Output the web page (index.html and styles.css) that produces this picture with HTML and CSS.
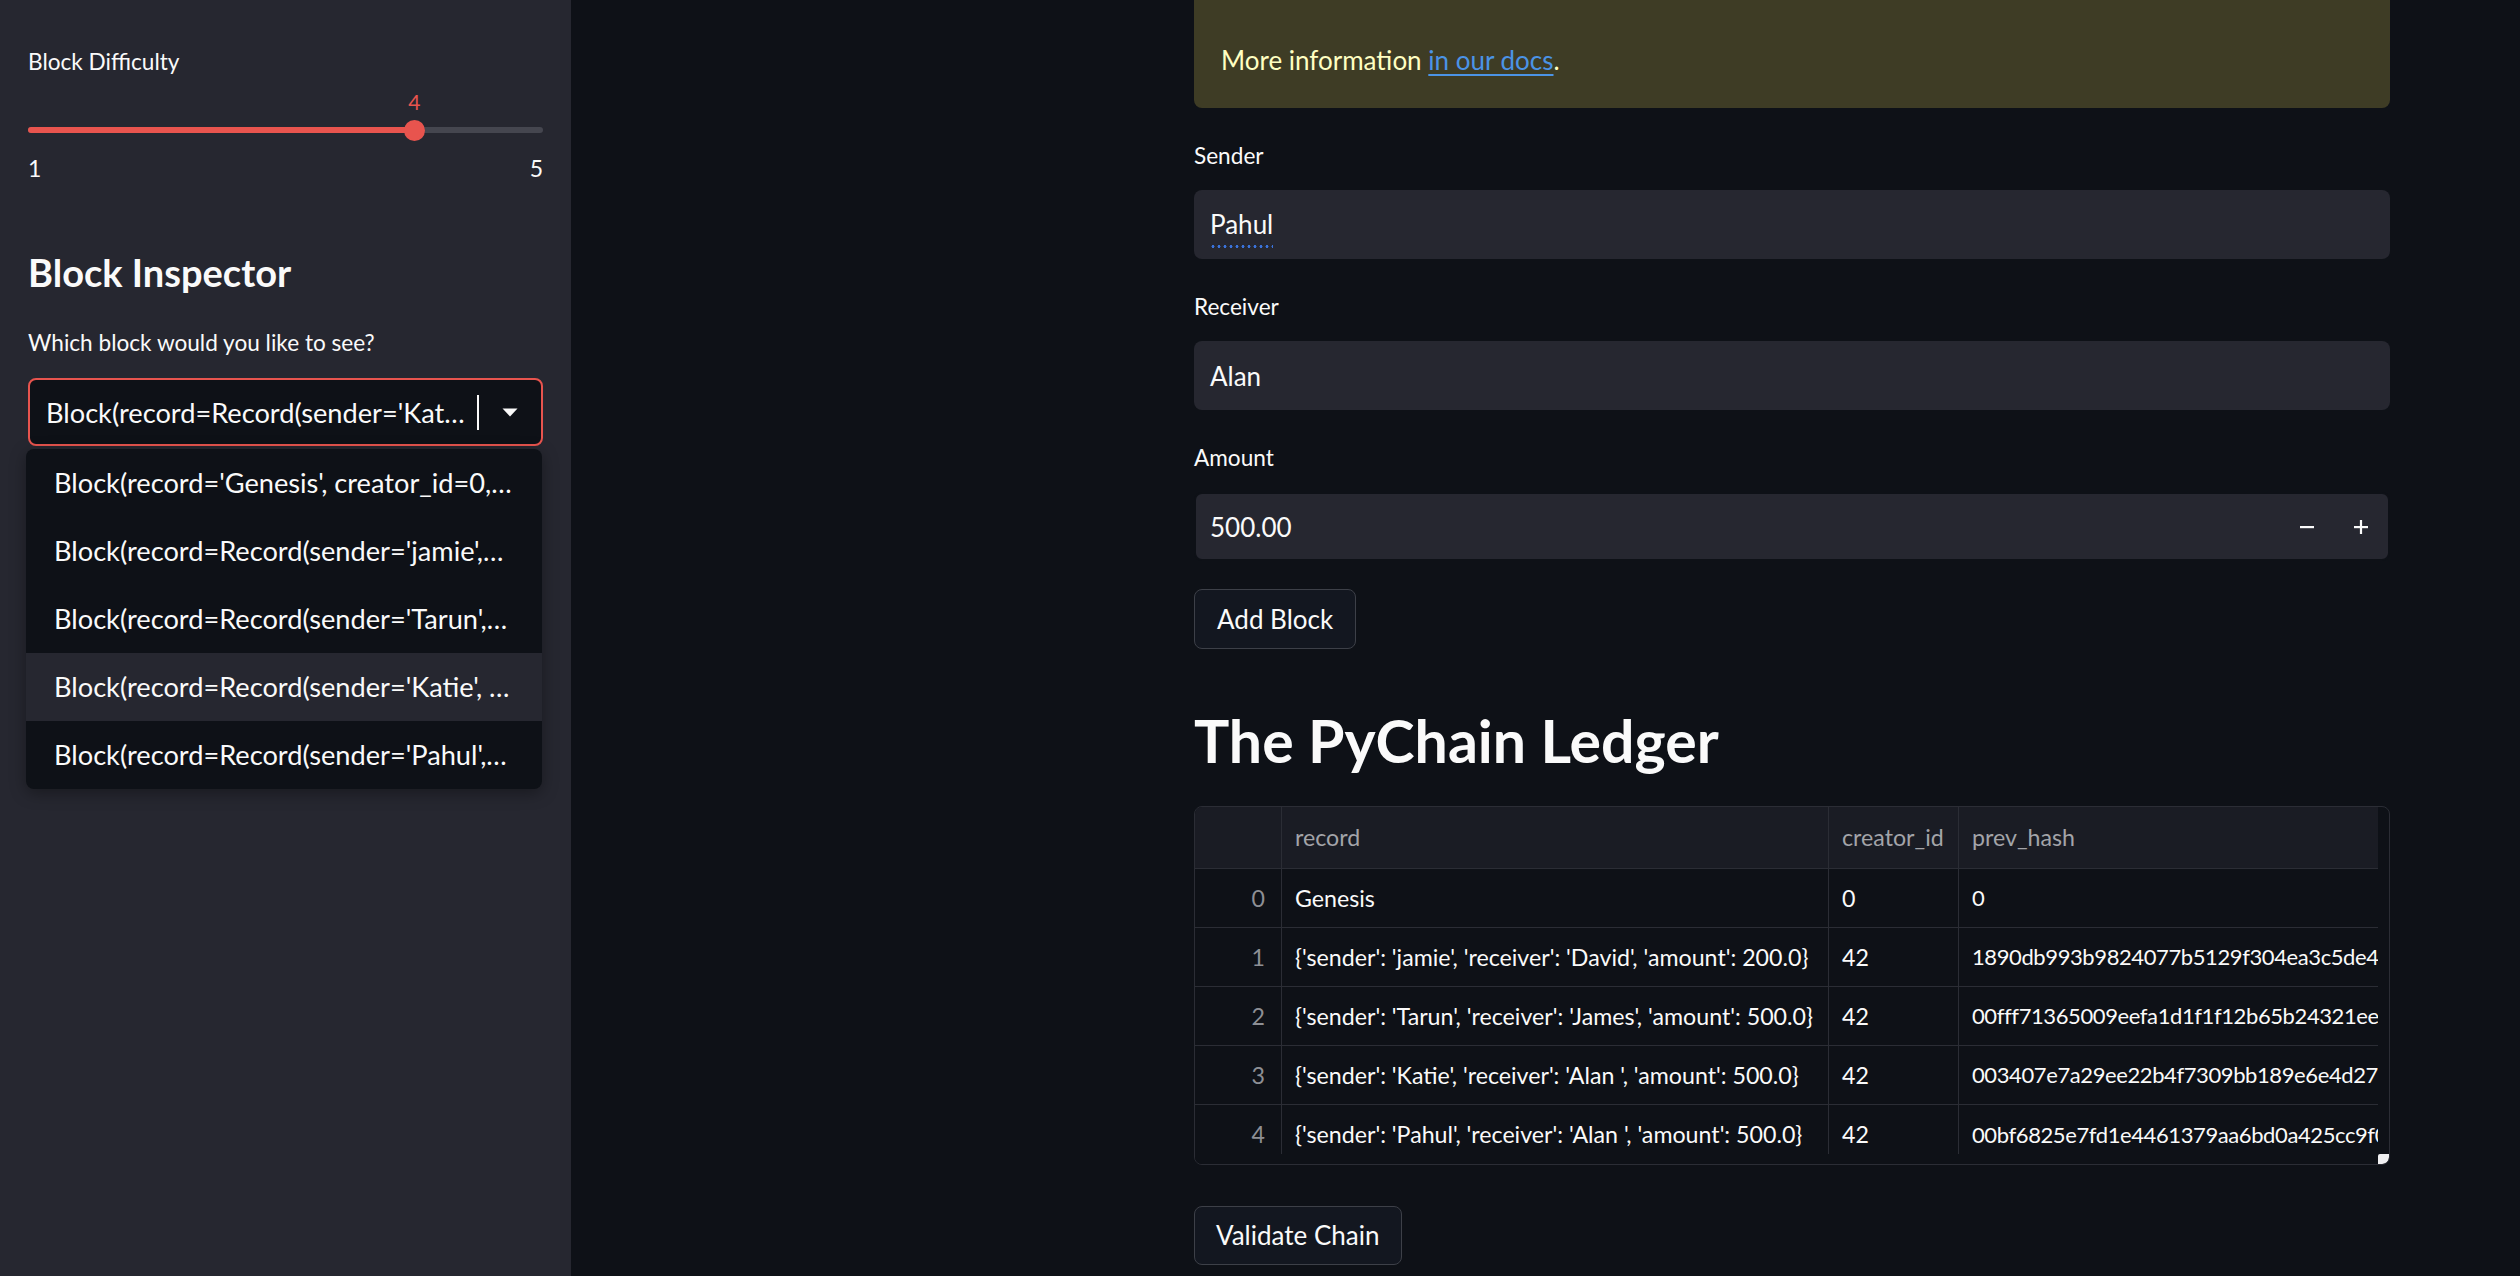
FILE: index.html
```html
<!DOCTYPE html>
<html lang="en">
<head>
<meta charset="utf-8">
<title>PyChain</title>
<link rel="stylesheet" href="styles.css">
</head>
<body>
<div class="app">
  <aside class="sidebar">
    <div class="label">Block Difficulty</div>
    <div class="slider">
      <div class="track">
        <div class="track-fill" style="width:75%"></div>
        <div class="thumb" style="left:75%"><span class="thumb-value">4</span></div>
      </div>
      <div class="ticks"><span>1</span><span>5</span></div>
    </div>

    <h2 class="side-heading">Block Inspector</h2>
    <div class="label side-label">Which block would you like to see?</div>
    <div class="select-wrap">
      <div class="select">
        <div class="select-text">Block(record=Record(sender='Kat…</div>
        <div class="caret"></div>
        <div class="select-arrow">
          <svg width="16" height="9" viewBox="0 0 16 9"><path d="M0.5 0.5 L15.5 0.5 L8 8.5 Z" fill="#fafafa"/></svg>
        </div>
      </div>
      <ul class="menu">
        <li class="menu-item">Block(record='Genesis', creator_id=0,…</li>
        <li class="menu-item">Block(record=Record(sender='jamie',…</li>
        <li class="menu-item">Block(record=Record(sender='Tarun',…</li>
        <li class="menu-item is-active">Block(record=Record(sender='Katie', …</li>
        <li class="menu-item">Block(record=Record(sender='Pahul',…</li>
      </ul>
    </div>
  </aside>

  <main class="main">
    <div class="content">
      <div class="alert">
        <p class="code-line"><code>streamlit run your_script.py [-- script args]</code></p>
        <p>More information <a href="#" class="link">in our docs</a>.</p>
      </div>

      <div class="field">
        <div class="label">Sender</div>
        <div class="input"><span class="spell">Pahul</span></div>
      </div>
      <div class="field">
        <div class="label">Receiver</div>
        <div class="input"><span>Alan</span></div>
      </div>
      <div class="field">
        <div class="label">Amount</div>
        <div class="input number">
          <span class="number-value">500.00</span>
          <div class="step">
            <svg width="14" height="14" viewBox="0 0 14 14"><rect x="0" y="6" width="14" height="2.2" fill="#fafafa"/></svg>
          </div>
          <div class="step">
            <svg width="14" height="14" viewBox="0 0 14 14"><rect x="0" y="6" width="14" height="2.2" fill="#fafafa"/><rect x="5.9" y="0" width="2.2" height="14" fill="#fafafa"/></svg>
          </div>
        </div>
      </div>

      <button class="btn btn-add">Add Block</button>

      <h1 class="title">The PyChain Ledger</h1>

      <div class="grid-wrap">
        <table class="grid">
          <colgroup>
            <col class="c-idx"><col class="c-rec"><col class="c-cre"><col class="c-hash">
          </colgroup>
          <thead>
            <tr><th class="idx"></th><th>record</th><th>creator_id</th><th class="last">prev_hash</th></tr>
          </thead>
          <tbody>
            <tr><td class="idx">0</td><td>Genesis</td><td>0</td><td class="last hash">0</td></tr>
            <tr><td class="idx">1</td><td>{'sender': 'jamie', 'receiver': 'David', 'amount': 200.0}</td><td>42</td><td class="last hash">1890db993b9824077b5129f304ea3c5de44c0e</td></tr>
            <tr><td class="idx">2</td><td>{'sender': 'Tarun', 'receiver': 'James', 'amount': 500.0}</td><td>42</td><td class="last hash">00fff71365009eefa1d1f1f12b65b24321eea7b</td></tr>
            <tr><td class="idx">3</td><td>{'sender': 'Katie', 'receiver': 'Alan ', 'amount': 500.0}</td><td>42</td><td class="last hash">003407e7a29ee22b4f7309bb189e6e4d270c1</td></tr>
            <tr><td class="idx">4</td><td>{'sender': 'Pahul', 'receiver': 'Alan ', 'amount': 500.0}</td><td>42</td><td class="last hash">00bf6825e7fd1e4461379aa6bd0a425cc9f0d3</td></tr>
          </tbody>
        </table>
        <div class="hscroll"></div>
        <div class="corner"></div>
      </div>

      <button class="btn btn-validate">Validate Chain</button>
    </div>
  </main>
</div>
</body>
</html>
```

FILE: styles.css
```css
* { box-sizing: border-box; }
html, body { margin: 0; padding: 0; }
body {
  font-family: Lato, "Noto Sans", "DejaVu Sans", sans-serif;
  background: #0e1117;
  color: #fafafa;
  overflow: hidden;
}
.app { display: flex; height: 1276px; }

/* ---------- sidebar ---------- */
.sidebar {
  width: 571px;
  flex: none;
  background: #262730;
  padding: 45px 28px 0 28px;
}
.label {
  font-size: 22.6px;
  line-height: 34px;
  height: 34px;
  color: #fafafa;
  white-space: nowrap;
}
.slider { position: relative; }
.track {
  position: relative;
  height: 6px;
  margin-top: 48px;
  background: #45464f;
  border-radius: 3px;
}
.track-fill { height: 100%; background: #e8544e; border-radius: 3px; }
.thumb {
  position: absolute;
  top: 50%;
  width: 21px;
  height: 21px;
  margin: -10.5px 0 0 -10.5px;
  border-radius: 50%;
  background: #e8544e;
}
.thumb-value {
  position: absolute;
  left: 50%;
  bottom: 100%;
  transform: translateX(-50%);
  margin-bottom: 6px;
  font-size: 21px;
  line-height: 24px;
  color: #e8544e;
}
.ticks {
  display: flex;
  justify-content: space-between;
  margin-top: 18px;
  font-size: 23px;
  line-height: 34px;
}
.side-heading {
  margin: 61px 0 0;
  font-size: 38px;
  line-height: 52px;
  font-weight: 700;
}
.side-label { margin-top: 28px; }
.select-wrap { position: relative; margin-top: 18px; }
.select {
  height: 68px;
  border: 2px solid #e8544e;
  border-radius: 8px;
  background: #0e1117;
  display: flex;
  align-items: center;
  padding-left: 16px;
  font-size: 27.2px;
}
.select-text { flex: 1; white-space: nowrap; overflow: hidden; }
.caret { width: 2px; height: 35px; background: #fafafa; flex: none; }
.select-arrow {
  width: 62px;
  flex: none;
  display: flex;
  align-items: center;
  justify-content: center;
}
.select-arrow svg { display: block; }
.menu {
  position: absolute;
  top: calc(100% + 3px);
  left: -2px;
  right: 1px;
  margin: 0;
  padding: 0;
  list-style: none;
  background: #0e1117;
  border-radius: 8px;
  overflow: hidden;
  box-shadow: 0 4px 16px rgba(0, 0, 0, 0.35);
}
.menu-item {
  height: 68px;
  line-height: 68px;
  padding-left: 28px;
  font-size: 27.2px;
  white-space: nowrap;
  overflow: hidden;
}
.menu-item.is-active { background: #262730; }

/* ---------- main ---------- */
.main {
  flex: 1;
  padding-left: 623px;
  overflow: hidden;
}
.content { width: 1196px; }
.alert {
  margin-top: -60px;
  background: #3e3c25;
  border-radius: 8px;
  padding: 27px 27px 27px;
  color: #ffffc2;
  font-size: 26px;
}
.alert p { margin: 0; line-height: 42px; white-space: nowrap; }
.alert .code-line {
  margin-bottom: 28px;
  font-family: "Liberation Mono", monospace;
  font-size: 21px;
  color: #8f8e78;
}
.link { color: #4b93e6; text-decoration: underline; text-underline-offset: 4px; text-decoration-thickness: 2px; }

.field { margin-top: 31px; }
.field .label { margin-bottom: 17px; }
.input {
  height: 69px;
  background: #262730;
  border-radius: 8px;
  display: flex;
  align-items: center;
  padding-left: 16px;
  font-size: 26px;
}
.spell {
  background-image: radial-gradient(circle, #3a72d9 1.3px, transparent 1.7px);
  background-size: 6px 5px;
  background-repeat: repeat-x;
  background-position: 0 100%;
  margin-bottom: -7px;
  padding-bottom: 9px;
}
.number { border: 2px solid #0e1117; padding-left: 14px; }
.number-value { flex: 1; }
.step {
  width: 54px;
  height: 100%;
  display: flex;
  align-items: center;
  justify-content: center;
}
.step svg { display: block; }

.btn {
  display: block;
  height: 60px;
  padding: 0 22px;
  border: 1px solid #3d4048;
  border-radius: 8px;
  background: #131720;
  color: #fafafa;
  font-family: inherit;
  font-size: 26px;
}
.btn-add { margin-top: 28px; }
.btn-validate { margin-top: 41px; height: 59px; padding: 0 21px; }

.title {
  margin: 57px 0 0;
  font-size: 59px;
  line-height: 1.2;
  font-weight: 700;
}

/* ---------- data grid ---------- */
.grid-wrap {
  position: relative;
  margin-top: 29px;
  border: 1px solid #2b2d35;
  border-radius: 8px;
  overflow: hidden;
  padding-right: 11px;
}
.grid {
  border-collapse: separate;
  border-spacing: 0;
  table-layout: fixed;
  width: 1183px;
  font-size: 23.2px;
}
.c-idx { width: 87px; }
.c-rec { width: 547px; }
.c-cre { width: 130px; }
.c-hash { width: 419px; }
.grid th, .grid td {
  padding: 0 13px;
  border-right: 1px solid #2b2d35;
  border-bottom: 1px solid #2b2d35;
  white-space: nowrap;
  overflow: hidden;
  text-align: left;
}
.grid th {
  height: 62px;
  background: #1a1c24;
  color: #a3a4a9;
  font-weight: 400;
}
.grid td { height: 59px; color: #fafafa; }
.grid .last { border-right: none; padding-right: 0; text-overflow: clip; }
.grid td.hash { font-size: 22px; letter-spacing: -0.4px; }
.grid td.idx { text-align: right; padding-right: 16px; color: #8d8f95; }
.grid tbody tr:last-child td { border-bottom: none; }
.hscroll {
  position: absolute;
  left: 0;
  right: 0;
  bottom: 0;
  height: 10px;
  background: #0e1117;
}
.corner {
  position: absolute;
  right: 0;
  bottom: 0;
  width: 11px;
  height: 10px;
  background: #f0f0f2;
  border-radius: 2px 0 6px 0;
}
```
